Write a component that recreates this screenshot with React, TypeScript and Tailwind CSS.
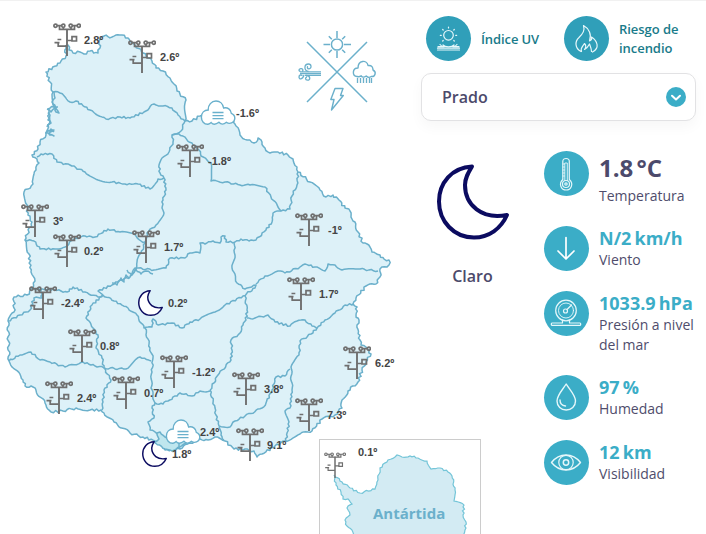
import type { ReactNode } from "react";

type Kind = "station" | "moon" | "cloud";

interface Place {
    kind: Kind;
    x: number;
    y: number;
    temp: string;
    tx: number;
    ty: number;
}

// x/y is the top left corner of the icon, tx/ty the left/middle of the label
const places: Place[] = [
    { kind: "station", x: 53, y: 23, temp: "2.8º", tx: 84, ty: 40 },
    { kind: "station", x: 128, y: 40, temp: "2.6º", tx: 160, ty: 57 },
    { kind: "cloud", x: 200, y: 99, temp: "-1.6º", tx: 236, ty: 113 },
    { kind: "station", x: 176, y: 144, temp: "-1.8º", tx: 208, ty: 161 },
    { kind: "station", x: 21, y: 204, temp: "3º", tx: 53, ty: 221 },
    { kind: "station", x: 53, y: 234, temp: "0.2º", tx: 84, ty: 251 },
    { kind: "station", x: 132, y: 230, temp: "1.7º", tx: 164, ty: 247 },
    { kind: "station", x: 295, y: 213, temp: "-1º", tx: 328, ty: 230 },
    { kind: "station", x: 29, y: 286, temp: "-2.4º", tx: 61, ty: 303 },
    { kind: "moon", x: 137, y: 289, temp: "0.2º", tx: 168, ty: 303 },
    { kind: "station", x: 287, y: 277, temp: "1.7º", tx: 319, ty: 294 },
    { kind: "station", x: 68, y: 329, temp: "0.8º", tx: 100, ty: 346 },
    { kind: "station", x: 160, y: 355, temp: "-1.2º", tx: 192, ty: 372 },
    { kind: "station", x: 343, y: 346, temp: "6.2º", tx: 375, ty: 363 },
    { kind: "station", x: 45, y: 381, temp: "2.4º", tx: 77, ty: 398 },
    { kind: "station", x: 112, y: 376, temp: "0.7º", tx: 144, ty: 393 },
    { kind: "station", x: 232, y: 372, temp: "3.8º", tx: 264, ty: 389 },
    { kind: "station", x: 295, y: 398, temp: "7.3º", tx: 327, ty: 415 },
    { kind: "station", x: 236, y: 428, temp: "9.1º", tx: 267, ty: 445 },
    { kind: "cloud", x: 165, y: 418, temp: "2.4º", tx: 200, ty: 432 },
    { kind: "moon", x: 141, y: 440, temp: "1.8º", tx: 172, ty: 454 },
];

const country =
    "65,46 68,45 69,50 73,53 80,52 84,54 90,51 98,53 100,48 99,42 104,36 112,37 122,35 128,38 134,44 143,53 152,61 156,68 163,71 170,78 174,84 177,91 186,100 185,121 192,121 200,116 234,120 236,126 240,135 247,140 254,143 258,138 262,142 265,148 270,153 278,152 288,155 293,159 297,167 298,172 310,182 320,190 326,197 333,195 339,200 345,208 350,211 352,219 355,222 358,232 363,243 370,247 372,252 380,255 384,259 389,260 389,265 380,269 380,277 376,284 366,286 356,298 353,304 357,307 356,315 359,320 357,325 360,340 361,345 366,347 371,354 366,362 362,370 358,382 348,391 342,400 342,408 335,415 322,419 312,431 300,434 285,441 275,446 262,454 257,457 254,451 245,449 234,449 225,441 215,437 208,440 200,439 190,443 180,449 165,450 155,441 143,437 130,433 114,422 104,413 101,410 90,410 76,408 63,411 51,412 45,403 33,387 25,386 23,380 9,361 8,321 14,312 14,297 27,295 33,288 35,281 31,272 29,254 25,240 32,222 28,215 27,205 24,192 33,184 36,170 39,163 32,155 38,149 40,142 46,135 48,125 50,115 48,109 54,107 53,92 50,82 46,72 60,63 66,56 65,46";

const borders = [
    "53,92 60,93 70,102 76,101 90,110 106,119 120,117 130,118 144,112 154,104 163,106 172,108 178,115 185,121",
    "185,121 181,131 172,135 173,142 169,152 162,158 159,165 160,173 164,178",
    "172,135 179,134 192,143 199,150 201,156 207,160 211,163 211,181 225,182 240,185 250,185 265,187 271,197 278,207 281,211",
    "298,172 297,185 292,196 290,209 281,211 273,213 272,222 266,230 256,240 249,241 241,239 235,242 226,242 225,236 221,237 220,243 213,241 205,244 200,243 200,253 190,253 185,258 170,258 166,268 154,270 136,268 130,277 120,280 112,285 98,291 103,295",
    "37,157 41,154 52,154 57,162 70,165 85,172 98,180 112,182 125,184 138,184 150,189 158,179 164,178",
    "164,178 166,190 163,200 162,208 164,213 156,225 147,233 145,243 141,253 137,262 135,270 130,276",
    "25,240 34,241 40,249 55,249 65,247 75,238 85,236 95,237 108,229 120,232 135,234 141,241 145,242",
    "34,289 55,290 67,292 73,287 85,292 98,297 103,295",
    "8,321 20,315 30,310 34,298 42,298 41,290",
    "103,295 92,305 86,318 93,328 98,335 96,348 102,358 104,368",
    "103,295 114,301 128,308 137,315 144,328 152,327 153,319 158,325 172,323 182,328 190,322 200,319 215,312 225,305 243,296 255,288 256,285 245,289 237,283 232,268 235,255 234,243",
    "256,284 265,276 278,271 285,273 300,267 305,264 315,267 325,271 328,264 335,265 342,270 360,269 378,271",
    "245,296 247,310 246,320 243,325 240,333 231,340 232,350 231,360 218,375 210,390",
    "247,318 255,318 268,315 275,322 290,326 297,321 305,320 312,326 317,329",
    "354,304 345,305 335,313 325,320 317,328 311,334 300,341 299,355 291,367 292,390 290,408 285,411 289,422 286,441",
    "290,369 285,376 276,377 272,390 266,403 262,408 245,416 235,421 230,427 219,426 216,415 215,408 210,390",
    "219,427 221,435 224,440",
    "155,403 163,404 168,401 180,393 192,396 200,391 210,391",
    "145,328 150,348 153,358 152,372 151,388 155,403 152,408 154,418 148,422 150,430 157,434",
    "9,361 20,355 31,352 40,360 50,362 65,367 83,362 95,366 104,368 126,369 140,357 151,361",
    "104,368 111,380 104,390 103,402 102,410",
    // small inlets of the western river
    "47,109 51,112 55,106 56,112 59,113 54,108 58,107",
    "54,92 55,98 52,102 55,107",
    "49,112 48,120 51,123 47,127",
    "47,130 54,130 49,134 54,136 46,133 51,129 54,132",
    "112,283 117,285 121,278 124,282 126,275 130,278",
    "127,270 132,275 135,268 141,274 146,271 153,274",
];

const antarctica =
    "334,475 342,482 350,488 360,493 375,489 378,480 380,468 388,460 395,457 397,455 402,457 410,456 418,458 427,461 431,469 440,468 448,472 452,476 455,490 454,501 464,505 463,515 466,522 465,530 461,538 356,538 352,530 347,526 345,520 350,515 347,508 352,504 348,499 343,499 341,492 336,485 334,475";

// Breaks straight runs into short uneven steps, so the lines read as rivers and coast
function rough(points: string, amount: number) {
    const pts = points.split(" ").map(p => p.split(",").map(Number));
    let d = `M${pts[0][0]} ${pts[0][1]}`;
    for (let i = 1; i < pts.length; i++) {
        const [x0, y0] = pts[i - 1];
        const [x1, y1] = pts[i];
        const length = Math.hypot(x1 - x0, y1 - y0);
        const steps = Math.max(1, Math.round(length / 2.2));
        for (let s = 1; s <= steps; s++) {
            const t = s / steps;
            const x = x0 + (x1 - x0) * t;
            const y = y0 + (y1 - y0) * t;
            const n = s === steps ? 0 : Math.sin(x * 12.9 + y * 78.2) * amount;
            d += `L${(x - ((y1 - y0) / length) * n).toFixed(1)} ${(y + ((x1 - x0) / length) * n).toFixed(1)}`;
        }
    }
    return d;
}

function StationIcon({ className, bold }: { className: string; bold?: boolean }) {
    return (
        <svg viewBox="0 0 28 34" className={className} fill="none" stroke="#6f6f6f" strokeWidth={bold ? 1.7 : 1.5}>
            <circle cx="2.5" cy="2.700" r="1.600" />
            <circle cx="10.300" cy="2.700" r="1.600" />
            <circle cx="17.700" cy="2.700" r="1.600" />
            <circle cx="25.800" cy="2.700" r="1.600" />
            <path d="M4 2.700h5M19 2.700h5M6.500 3v3.400h15V3M10.300 4.200v2M18 4.200v2" />
            <path d="M14 6v27" strokeWidth="1.900" />
            <path d="M14 17.500h5M19 13.600h4.500v4.400H19zM14 23.200H5.200v-3.500M1.500 19.700h5M4.500 16.500h3.800" />
        </svg>
    );
}

function MoonIcon({ className, stroke }: { className: string; stroke: number }) {
    return (
        <svg viewBox="0 0 78 80" className={className}>
            <path
                d="M38 4.500C18 5.500 5 21 5 39.500 5 59.500 20 75.500 40 75.500c15 0 27-9 33-22.500-25 5-42-10-42-30 0-7 3-12 7-18.500Z"
                fill="white"
                stroke="#0b0b60"
                strokeWidth={stroke}
                strokeLinejoin="round"
            />
        </svg>
    );
}

function CloudIcon({ className }: { className: string }) {
    return (
        <svg viewBox="0 0 36 28" className={className} fill="white" stroke="#69b0cc" strokeWidth="1.4">
            <path d="M8 25.3C4 25.5 1.3 22 1.4 18c.1-4 2.8-7 6.8-7C8 6 11.500 2 16 2c4 0 7 3 7.600 7 4-1 7.400 1.500 7.700 5.300 2.500 1 3.800 3.200 3.400 5.800-.5 3.600-5 5.500-8.300 3.200-2.500 2.200-5.500 2.200-7.500 0-3 2.300-6 2.300-7.700.3-1 1-2 1.600-3.200 1.700Z" />
            <path d="M12.500 13.500h11M12.500 16.600h11M12.500 19.700h11" strokeWidth="1.300" />
        </svg>
    );
}

function Marker({ place }: { place: Place }) {
    return (
        <>
            <div className="absolute" style={{ left: place.x, top: place.y }}>
                {place.kind === "station" && <StationIcon className="w-[28px] h-[34px]" bold />}
                {place.kind === "moon" && <MoonIcon className="w-[27px] h-[28px]" stroke={4.2} />}
                {place.kind === "cloud" && <CloudIcon className="w-[36px] h-[28px]" />}
            </div>
            <span
                className="absolute -translate-y-1/2 font-['Liberation_Sans',sans-serif] text-[11px] leading-[14px] font-bold text-[#444]"
                style={{ left: place.tx, top: place.ty }}
            >
                {place.temp}
            </span>
        </>
    );
}

function WeatherMap() {
    return (
        <div className="relative w-[410px] h-[534px] shrink-0 overflow-hidden">
            <svg viewBox="0 0 410 534" className="w-[410px] h-[534px]" fill="none" stroke="#6bb0cb" strokeWidth="1.5" strokeLinejoin="round">
                <path d={rough(country, 1.2)} fill="#ddf1f8" />
                {borders.map(line => (
                    <path key={line} d={rough(line, 0.9)} />
                ))}
                <path d={rough("154,442 159,439 157,433 160,432 165,437 178,440 190,441 180,447 172,451 165,449 154,442", 0.6)} fill="#bfe6ee" />
                <path d="M179 440v8" />

                {/* compass of weather kinds */}
                <path d="M307 42l60 60M367 42l-60 60" />
                <circle cx="337" cy="44.500" r="5.600" />
                <path d="M337 31v7M337 51v7M323.500 44.500h6.500M344 44.500h7M328.800 36.300l3 3M342.200 49.700l3 3M328.800 52.700l3-3M342.200 39.300l3-3" />
                <path d="M357 76.500c-5-.3-5-8.500 1-8.500 0-8 9-8.500 10-2.500 4-.5 5 2 5 4.500 4 2 2 7-1.800 6.500-2 1.500-3.500 1-5-.5-2 1.500-4 1.500-5-.2-1.500 1-3 1-4.200.7Z" strokeWidth="1.400" />
                <path d="M357.500 78v5M360.500 78v5M363.500 78v5M366.500 78v5M369.500 78v5M371.500 78v5" strokeWidth="1.300" />
                <path d="M335 88.500h8l-2.500 7h2.800L331.500 110l2.500-10.500h-3.200Z" strokeWidth="1.400" />
                <path d="M300 71.800h21M300 73.600h21M305 75.300h16" strokeWidth="1.200" />
                <path d="M308.500 71.500c-5-1-4.500-7.500 0-7.500 3 0 3.500 4.500.5 4.800-2 0-2-2-1-2.500M302 71.500c2-1 .5-3.500-1.500-2.800-2.500.8-1.500 2.800 0 2.500M304 75c-1.500 5-5 4.500-5 2s3-2.500 3-1M306 75.500c5 0 4.500 5 1.500 4.700-2.500-.2-2.500-3-.5-3" strokeWidth="1.300" />
            </svg>
            {places.map(place => (
                <Marker key={`${place.x}-${place.y}`} place={place} />
            ))}
        </div>
    );
}

function AntarcticaInset() {
    return (
        <div className="absolute left-[319px] top-[439px] w-[162px] h-[100px] overflow-hidden border border-[#ccc] bg-white">
            <svg viewBox="320 440 160 98" className="w-[160px] h-[98px]">
                <path d={rough(antarctica, 0.9)} fill="#d3ebf3" stroke="#74c5d8" strokeWidth="1.200" />
            </svg>
            <StationIcon className="absolute left-[4px] top-[12px] w-[22px] h-[27px]" />
            <span className="absolute left-[38px] top-[5px] font-['Liberation_Sans',sans-serif] text-[11px] leading-[14px] font-bold text-[#444]">
                0.1º
            </span>
            <span className="absolute left-[53px] top-[63px] text-[15px] leading-5 font-bold text-[#6bb0cb]">Antártida</span>
        </div>
    );
}

function IconCircle({ children, dark }: { children: ReactNode; dark?: boolean }) {
    return (
        <div className={dark ? "size-[45px] shrink-0 rounded-full bg-[#309fb9]" : "size-[45px] shrink-0 rounded-full bg-[#3badc7]"}>
            <svg viewBox="0 0 45 45" className="size-[45px]" fill="none" stroke="#e6f7fa" strokeWidth="1.200" strokeLinecap="round" strokeLinejoin="round">
                {children}
            </svg>
        </div>
    );
}

interface MetricProps {
    value: string;
    label: string;
    className: string;
    big?: boolean;
    children: ReactNode;
}

function Metric({ value, label, className, big, children }: MetricProps) {
    return (
        <div className={`flex gap-[10px] ${className}`}>
            <IconCircle>{children}</IconCircle>
            <div className="whitespace-pre-line">
                <p className={big ? "pt-[3px] text-[24px] leading-[28px] font-bold text-[#4c4a6b] [word-spacing:-3px]" : "pt-[1px] text-[18px] leading-[23px] font-bold text-[#3badc7] [word-spacing:-1.5px]"}>
                    {value}
                </p>
                <p className={big ? "pt-[4px] text-[14px] leading-[20px] text-[#4f4d6c]" : "text-[14px] leading-[20px] text-[#4f4d6c]"}>{label}</p>
            </div>
        </div>
    );
}

export default function App() {
    return (
        <div className="relative flex w-[706px] h-[534px] overflow-hidden bg-white font-['Open_Sans','Noto_Sans',sans-serif] shadow-[inset_0_1px_0_#f1f1f1]">
            <WeatherMap />
            <AntarcticaInset />

            <div className="flex flex-col w-[296px] pl-[11px] pt-[16px]">
                <div className="flex items-center h-[45px] pl-[5px] text-[13px] leading-[19px] font-semibold text-[#197b8a]">
                    <IconCircle dark>
                        <circle cx="22.500" cy="19.300" r="4.800" />
                        <path d="M22.500 11v1M14.300 19.300h1M29.700 19.300h1M16.700 13.500l.5.500M27.800 14l.5-.5M16.700 25l.5-.5M27.800 24.500l.5.500M12 30.700h6c-2 0-3-.8-4-2.200M33 30.700h-6c2 0 3-.8 4-2.200M17 29c2 2.300 9 2.300 11 0M11.500 34h22M11.500 32.200h22" />
                    </IconCircle>
                    <span className="w-[93px] pl-[10px] pt-[2px] tracking-[-0.1px]">Índice UV</span>
                    <IconCircle dark>
                        <path d="M17 35.500c-6-3-6.500-10-2-14 4-4 6-7 4.500-12 5.500 3 8.500 9 6 15.500 2-.5 2.500-2 2-4 6 4 8.500 11 1 15M17.500 35.500c-1.500-4 2-5.500 3-8 1.500 1.500 1.500 4 0 6 2.500-1.500 4-3.500 5-5.500 1 2.500 2 4.500 2 7.500" strokeWidth="1.200" />
                    </IconCircle>
                    <span className="w-[80px] pl-[10px] tracking-[-0.05px]">
                        Riesgo de
                        <br />
                        incendio
                    </span>
                </div>

                <button className="mt-[12px] flex items-center justify-between w-[275px] h-[48px] rounded-[10px] border border-[#e2e2e4] bg-white pl-[20px] pr-[9px] text-[16px] font-semibold text-[#4c4a6b] shadow-[0_6px_14px_rgba(0,0,0,0.035)]">
                    Prado
                    <svg viewBox="0 0 20 20" className="size-[20px]">
                        <circle cx="10" cy="10" r="10" fill="#3badc7" />
                        <path d="M6 8.700l4 3.800 4-3.800" fill="none" stroke="white" strokeWidth="2" strokeLinecap="round" strokeLinejoin="round" />
                    </svg>
                </button>

                <div className="flex pt-[30px]">
                    <div className="flex flex-col items-center w-[123px] pt-[11px] pr-[20px]">
                        <MoonIcon className="w-[78px] h-[80px]" stroke={4} />
                        <p className="mt-[22px] text-[16px] leading-[24px] font-semibold text-[#4c4a6b]">Claro</p>
                    </div>
                    <div className="flex flex-col w-[162px]">
                        <Metric value="1.8 °C" label="Temperatura" className="h-[75px]" big>
                            <path d="M18.800 28.500V10.500c0-4 6.500-4 6.500 0v18c5 4.500 1.500 10.500-3.200 10.500s-8-6-3.300-10.500Z" />
                            <circle cx="22" cy="33" r="3.500" />
                            <circle cx="22" cy="33" r="1.200" />
                            <path d="M20.800 29.500V12h2.500v17.500M19 13h1.500M19 16h1.500M19 19h1.500M19 22h1.500M19 25h1.500" strokeWidth="0.900" />
                        </Metric>
                        <Metric value="N/2 km/h" label="Viento" className="h-[65px]">
                            <path d="M22 11.500v21M14 25l8 8 8-8" stroke="white" strokeWidth="1.700" />
                        </Metric>
                        <Metric value="1033.9 hPa" label={"Presión a nivel\ndel mar"} className="h-[84px]">
                            <circle cx="22" cy="19.500" r="10.300" />
                            <circle cx="22" cy="19.500" r="7.500" strokeWidth="0.900" />
                            <circle cx="21.500" cy="20" r="2" />
                            <path d="M23 18.500l4.500-4.500M18.500 29v3H8c-1 0-1 2.300 0 2.300h28c1 0 1-2.300 0-2.300H25.500v-3" />
                        </Metric>
                        <Metric value="97 %" label="Humedad" className="h-[65px]">
                            <path d="M22.200 9c-3 5-9.200 11-9.200 17 0 5.300 4 9 9.200 9s9.300-3.700 9.300-9c0-6-6.300-12-9.300-17ZM16 25c0 3 2 5.500 5.500 6" strokeWidth="1.400" />
                        </Metric>
                        <Metric value="12 km" label="Visibilidad" className="h-[65px]">
                            <path d="M7.500 22.500c8-10 21-10 29 0-8 10-21 10-29 0Z" strokeWidth="1.400" />
                            <circle cx="22" cy="22.500" r="7.200" />
                            <circle cx="22" cy="22.500" r="2.700" strokeWidth="1.500" />
                        </Metric>
                    </div>
                </div>
            </div>
        </div>
    );
}
